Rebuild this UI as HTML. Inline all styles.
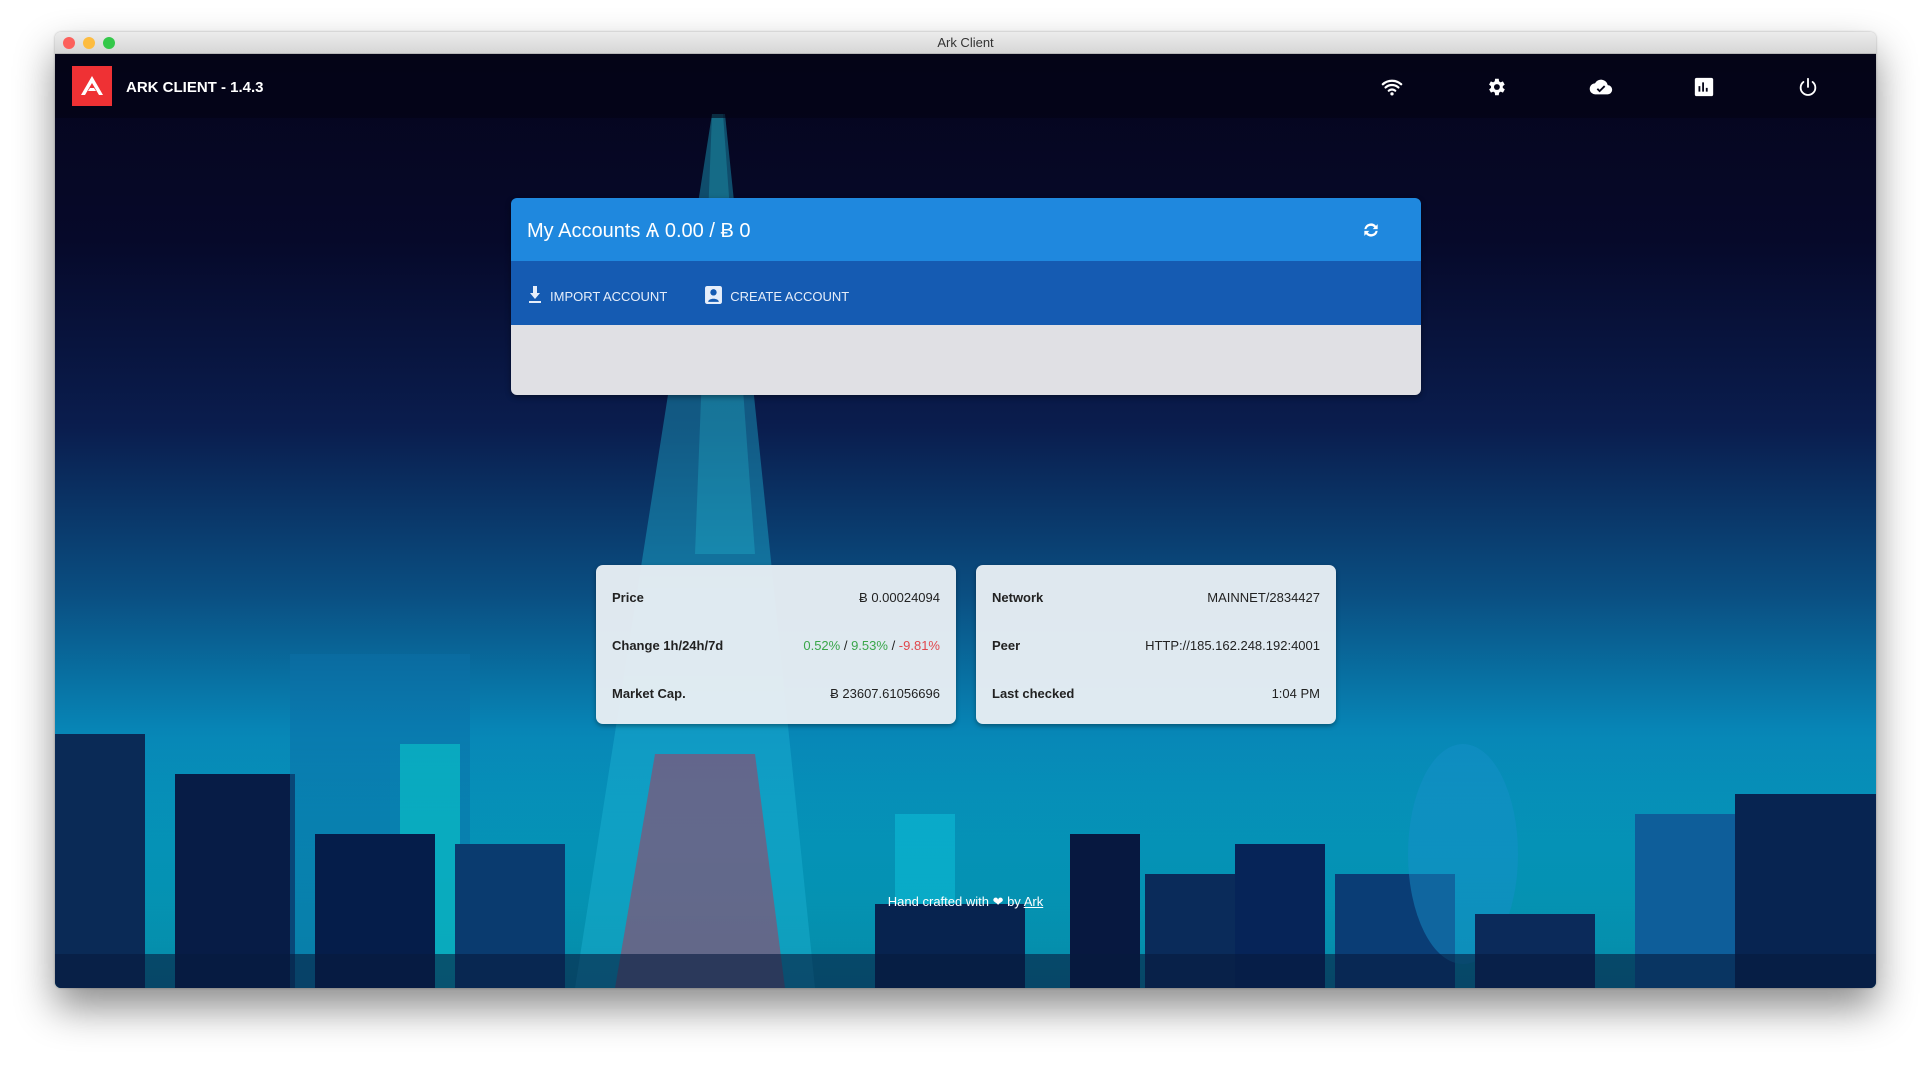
<!DOCTYPE html>
<html><head><meta charset="utf-8"><style>
*{margin:0;padding:0;box-sizing:border-box}
body{width:1932px;height:1069px;background:#fff;font-family:"Liberation Sans",sans-serif;position:relative;overflow:hidden}
.win{position:absolute;left:55px;top:32px;width:1821px;height:956px;border-radius:6px;overflow:hidden;box-shadow:0 20px 40px rgba(0,0,0,.45),0 0 2px rgba(0,0,0,.3)}
.tb{height:22px;background:linear-gradient(#ececec,#d6d6d6);border-bottom:1px solid #b8b8b8;text-align:center;font-size:13px;line-height:22px;color:#333;position:relative}
.dot{position:absolute;top:5px;width:12px;height:12px;border-radius:50%}
.app{position:absolute;top:22px;left:0;right:0;bottom:0;background:linear-gradient(180deg,#05051c 0%,#06092a 20%,#0a1d4e 40%,#0a4f82 58%,#0784b5 72%,#06b3cf 88%,#0ad8e0 100%);overflow:hidden}
.nav{position:absolute;top:0;left:0;right:0;height:64px;background:rgba(3,3,20,.6)}
.logo{position:absolute;left:17px;top:12px;width:40px;height:40px;background:#ef3134}
.ttl{position:absolute;left:71px;top:25px;color:#fff;font-size:15px;font-weight:bold}
.ic{position:absolute;top:22px;width:22px;height:22px}
.card{position:absolute;left:456px;top:144px;width:910px;height:197px;border-radius:6px;overflow:hidden;box-shadow:0 2px 6px rgba(0,0,0,.4)}
.ch{height:63px;background:#1f88de;color:#fff;font-size:20px;padding:22px 16px;}
.ct{height:64px;background:#155bb2;color:#e6eefa;font-size:13px;padding:25px 17px;display:flex;gap:38px}
.cg{height:70px;background:#e0e0e4}
.ic2{display:inline-block;vertical-align:-3px;margin-right:8px}
.info{position:absolute;top:511px;width:360px;height:159px;background:rgba(232,238,244,.96);border-radius:7px;box-shadow:0 2px 5px rgba(0,0,0,.35);padding:19px 16px 0;font-size:13px;color:#222}
.row{display:flex;justify-content:space-between;height:48px;line-height:20px;padding-top:4px}
.row b{font-weight:bold}
.g{color:#3aa64a}.r{color:#e0474c}
.ft{position:absolute;left:0;right:0;top:840px;text-align:center;color:#fff;font-size:13px}
.b{position:absolute}
</style></head><body>
<div class="win">
<div class="tb"><span class="dot" style="left:8px;background:#fc605c"></span><span class="dot" style="left:28px;background:#fdbc40"></span><span class="dot" style="left:48px;background:#34c84a"></span>Ark Client</div>
<div class="app">
<div class="b" style="left:0;bottom:0;width:1821px;height:250px;background:linear-gradient(180deg,rgba(0,40,80,0) 0%,rgba(0,60,110,.5) 100%)"></div>
<svg class="b" style="left:0;top:0" width="1821" height="934">
<polygon points="657,60 670,60 760,934 520,934" fill="#1fb7d8" opacity=".4"/>
<polygon points="657,60 668,60 700,500 640,500" fill="#2fe6f4" opacity=".2"/>
<polygon points="600,700 700,700 730,934 560,934" fill="#c9264a" opacity=".45"/>
<rect x="0" y="680" width="90" height="254" fill="#0a2a56"/>
<rect x="120" y="720" width="120" height="214" fill="#071c46"/>
<rect x="235" y="600" width="180" height="334" fill="#0b6fa8" opacity=".5"/>
<rect x="345" y="690" width="60" height="244" fill="#0ad6cf" opacity=".5"/>
<rect x="260" y="780" width="120" height="154" fill="#051d4a"/>
<rect x="400" y="790" width="110" height="144" fill="#0a3b6f"/>
<rect x="840" y="760" width="60" height="174" fill="#0ec3dc" opacity=".5"/>
<rect x="820" y="850" width="150" height="84" fill="#07234f"/>
<rect x="1015" y="780" width="70" height="154" fill="#071840"/>
<rect x="1090" y="820" width="110" height="114" fill="#0a2b5a"/>
<rect x="1180" y="790" width="90" height="144" fill="#062458"/>
<rect x="1280" y="820" width="120" height="114" fill="#0a3d75"/>
<ellipse cx="1408" cy="800" rx="55" ry="110" fill="#1590c9" opacity=".5"/>
<rect x="1420" y="860" width="120" height="74" fill="#0b2a5a"/>
<rect x="1580" y="760" width="100" height="174" fill="#0e5e9a"/>
<rect x="1680" y="740" width="141" height="194" fill="#072451"/>
<rect x="0" y="900" width="1821" height="34" fill="#061b3e" opacity=".6"/>
</svg>
<div class="nav">
<div class="logo"><svg width="40" height="40" viewBox="0 0 40 40"><path d="M20 10 L31 29 L27 29 L20 17 L13 29 L9 29Z M16 25 L24 25 L22 22 L18 22Z" fill="#fff"/></svg></div>
<div class="ttl">ARK CLIENT - 1.4.3</div>
<svg class="ic" style="left:1326px" viewBox="0 0 24 24"><path d="M2 9a15 15 0 0 1 20 0M5 12.5a10.5 10.5 0 0 1 14 0M8.5 16a5.5 5.5 0 0 1 7 0" stroke="#fff" stroke-width="2.4" fill="none" stroke-linecap="round"/><circle cx="12" cy="19.5" r="1.8" fill="#fff"/></svg>
<svg class="ic" style="left:1430px" viewBox="0 0 24 24"><path fill="#fff" d="M19.4 13a7.5 7.5 0 0 0 0-2l2.1-1.6-2-3.5-2.5 1a7 7 0 0 0-1.700-1L15 3h-4l-.4 2.9a7 7 0 0 0-1.7 1l-2.5-1-2 3.5L6.6 11a7.5 7.5 0 0 0 0 2l-2.1 1.6 2 3.5 2.5-1a7 7 0 0 0 1.7 1L11 21h4l.4-2.9a7 7 0 0 0 1.7-1l2.5 1 2-3.5z"/><circle cx="13" cy="12" r="3.2" fill="#050518"/></svg>
<svg class="ic" style="left:1533px;width:26px" viewBox="0 0 24 24"><path fill="#fff" d="M19.4 10A7.5 7.5 0 0 0 5.4 8 6 6 0 0 0 6 20h13a5 5 0 0 0 .4-10z"/><path d="M8 14l2.5 2.5L16 11" stroke="#050518" stroke-width="2" fill="none"/></svg>
<svg class="ic" style="left:1638px" viewBox="0 0 24 24"><rect x="2" y="2" width="20" height="20" rx="2" fill="#fff"/><path d="M7 17V11M11 17V7M15 17V13" stroke="#050518" stroke-width="2"/></svg>
<svg class="ic" style="left:1742px" viewBox="0 0 24 24"><path d="M12 3v9M7 6.5a8 8 0 1 0 10 0" stroke="#fff" stroke-width="2" fill="none" stroke-linecap="round"/></svg>
</div>
<div class="card">
<div class="ch">My Accounts Ѧ 0.00 / Ƀ 0<svg style="position:absolute;right:40px;top:22px" width="20" height="20" viewBox="0 0 24 24"><path d="M4 11a8 8 0 0 1 14-4l2-2v6h-6l2-2a5.5 5.5 0 0 0-9.5 2zM20 13a8 8 0 0 1-14 4l-2 2v-6h6l-2 2a5.5 5.5 0 0 0 9.5-2z" fill="#fff"/></svg></div>
<div class="ct"><span><svg class="ic2" width="14" height="18" viewBox="0 0 14 18"><path d="M5 0h4v7h3L7 13 2 7h3z M1 15h12v2H1z" fill="#e6eefa"/></svg>IMPORT ACCOUNT</span><span><svg class="ic2" width="17" height="18" viewBox="0 0 16 17"><rect width="16" height="17" rx="2" fill="#e6eefa"/><circle cx="8" cy="6" r="3" fill="#155bb2"/><path d="M3 15c0-4 10-4 10 0z" fill="#155bb2"/></svg>CREATE ACCOUNT</span></div>
<div class="cg"></div>
</div>
<div class="info" style="left:541px">
<div class="row"><b>Price</b><span>Ƀ 0.00024094</span></div>
<div class="row"><b>Change 1h/24h/7d</b><span><span class="g">0.52%</span> / <span class="g">9.53%</span> / <span class="r">-9.81%</span></span></div>
<div class="row"><b>Market Cap.</b><span>Ƀ 23607.61056696</span></div>
</div>
<div class="info" style="left:921px">
<div class="row"><b>Network</b><span>MAINNET/2834427</span></div>
<div class="row"><b>Peer</b><span>HTTP://185.162.248.192:4001</span></div>
<div class="row"><b>Last checked</b><span>1:04 PM</span></div>
</div>
<div class="ft">Hand crafted with ❤ by <u>Ark</u></div>
</div>
</div>
</body></html>
